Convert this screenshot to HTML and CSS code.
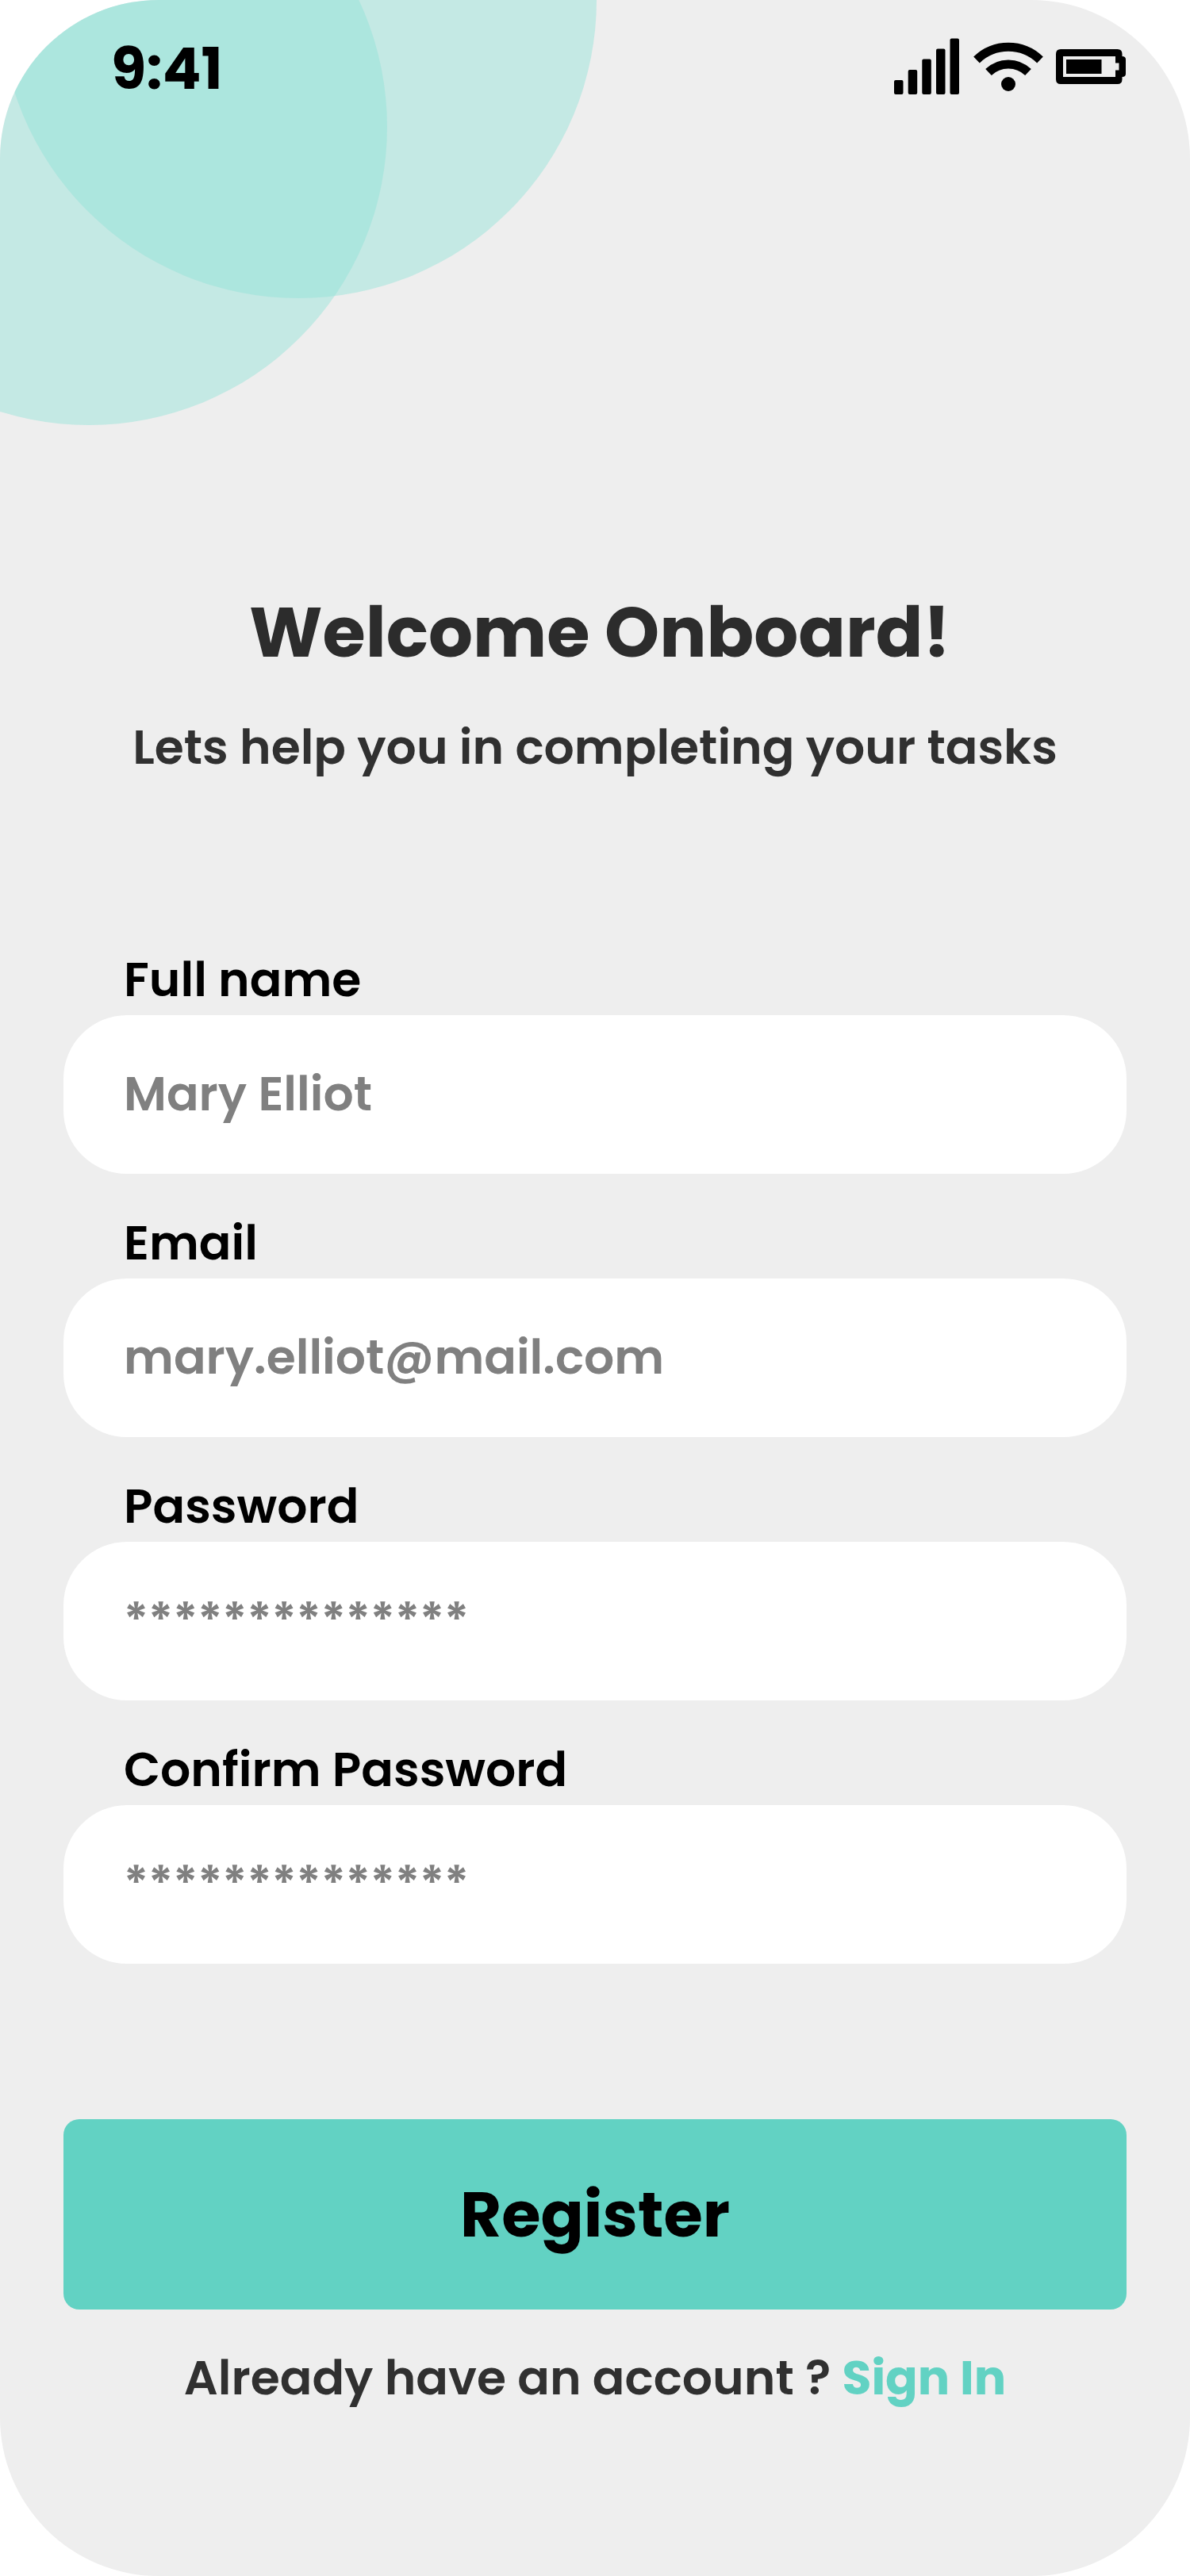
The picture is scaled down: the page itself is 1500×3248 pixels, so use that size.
FILE: index.html
```html
<!DOCTYPE html>
<html lang="en">
<head>
  <meta charset="utf-8">
  <meta name="viewport" content="width=device-width, initial-scale=1">
  <title>Welcome Onboard!</title>
  <link rel="stylesheet" href="styles.css">
</head>
<body>
  <div class="screen">
    <div class="circle circle-top" aria-hidden="true"></div>
    <div class="circle circle-left" aria-hidden="true"></div>

    <header class="status-bar">
      <time class="clock">9:41</time>
      <div class="status-icons">
        <svg width="84" height="72" viewBox="0 0 84 72" role="img" aria-label="Signal">
          <rect x="0" y="53" width="11.500" height="18" rx="2"/>
          <rect x="17.700" y="40" width="11.500" height="31" rx="2"/>
          <rect x="35.300" y="26.500" width="11.500" height="44.500" rx="2"/>
          <rect x="53" y="13.500" width="11.500" height="57.500" rx="2"/>
          <rect x="70.500" y="0.500" width="11.500" height="70.500" rx="2"/>
        </svg>
        <svg class="wifi" width="88" height="62" viewBox="0 0 88 62" role="img" aria-label="Wi-Fi">
          <path class="arc" d="M4 22.500A57.500 57.500 0 0 1 84 22.500"/>
          <path class="arc" d="M19 38A36 36 0 0 1 69 38"/>
          <circle cx="44" cy="53" r="9"/>
        </svg>
        <svg width="88" height="44" viewBox="0 0 88 44" role="img" aria-label="Battery">
          <path fill-rule="evenodd" d="M6 0H77.500Q83.500 0 83.500 6V9Q88 9 88 13V31Q88 35 83.500 35V38Q83.500 44 77.500 44H6Q0 44 0 38V6Q0 0 6 0ZM9 9V35H75V26.500H79.500V17.500H75V9Z"/>
          <rect x="13" y="13" width="44.500" height="18"/>
        </svg>
      </div>
    </header>

    <main class="content">
      <h1 class="title">Welcome Onboard!</h1>
      <p class="subtitle">Lets help you in completing your tasks</p>

      <form class="form">
        <div class="field">
          <label for="name">Full name</label>
          <input id="name" type="text" placeholder="Mary Elliot">
        </div>
        <div class="field">
          <label for="email">Email</label>
          <input id="email" type="email" placeholder="mary.elliot@mail.com">
        </div>
        <div class="field">
          <label for="password">Password</label>
          <input id="password" type="password" placeholder="**************">
        </div>
        <div class="field">
          <label for="confirm">Confirm Password</label>
          <input id="confirm" type="password" placeholder="**************">
        </div>
        <button class="register" type="submit">Register</button>
      </form>

      <p class="signin">Already have an account ? <a href="#">Sign In</a></p>
    </main>
  </div>
</body>
</html>
```

FILE: styles.css
```css
* {
  box-sizing: border-box;
}

body {
  margin: 0;
  background: #fff;
  color: #000;
  font-family: Poppins, Inter, "Open Sans", sans-serif;
  font-size: 60px;
  font-weight: 600;
}

.screen {
  position: relative;
  min-height: 100vh;
  overflow: hidden;
  border-radius: 200px;
  background: #eee;
}

/* Decorative overlapping circles behind the top corner */
.circle {
  position: absolute;
  width: 752px;
  height: 752px;
  border-radius: 50%;
  background: rgba(145, 227, 216, 0.45);
}

.circle-top {
  top: -376px;
  left: 0;
}

.circle-left {
  top: -216px;
  left: -264px;
}

.status-bar {
  position: relative;
  display: flex;
  align-items: center;
  justify-content: space-between;
  padding: 40px 81px 0 140px;
}

.clock {
  padding-top: 6px;
  font-size: 72px;
  font-weight: 700;
  line-height: 82px;
}

.status-icons {
  display: flex;
  align-items: center;
  gap: 16px;
}

.wifi .arc {
  fill: none;
  stroke: #000;
  stroke-width: 11;
}

.content {
  position: relative;
  padding: 610px 80px 80px;
}

.title {
  margin: 0 0 40px;
  padding-left: 12px;
  color: #2c2c2c;
  font-size: 88px;
  font-weight: 700;
  line-height: 120px;
  text-align: center;
}

.subtitle,
.signin {
  margin: 0;
  color: #303030;
  line-height: 88px;
  text-align: center;
}

.form {
  display: flex;
  flex-direction: column;
  gap: 42px;
  margin: 204px 0 42px;
}

.field {
  display: flex;
  flex-direction: column;
}

.field label {
  padding: 0 76px;
  line-height: 90px;
}

.field input {
  width: 100%;
  height: 200px;
  padding: 0 76px 2px;
  border: 0;
  border-radius: 80px;
  background: #fff;
  color: #000;
  font: inherit;
}

.field input::placeholder {
  color: gray;
  opacity: 1;
}

.register {
  height: 240px;
  margin-top: 154px;
  border: 0;
  border-radius: 20px;
  background: #62d2c3;
  color: #000;
  font: inherit;
  font-size: 80px;
  font-weight: 700;
}

.signin a {
  color: #62d2c3;
  font-weight: 700;
  text-decoration: none;
}
```
